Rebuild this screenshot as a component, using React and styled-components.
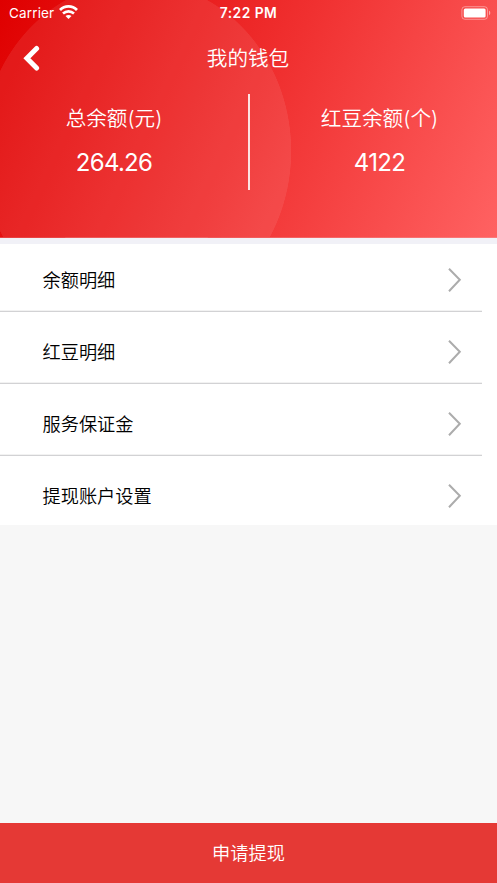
import React from 'react';
import styled, { createGlobalStyle } from 'styled-components';

const GlobalStyle = createGlobalStyle`
  * {
    box-sizing: border-box;
  }
  body {
    margin: 0;
    font-family: Inter, 'Noto Sans CJK SC', sans-serif;
  }
`;

const Page = styled.div`
  display: flex;
  flex-direction: column;
  height: 883px;
  background-color: #f7f7f7;
`;

const Header = styled.header`
  height: 238px;
  flex-shrink: 0;
  color: #fff;
  border-bottom: 1px solid rgba(255, 255, 255, 0.25);
  background:
    radial-gradient(155px 170px at 136.5px 151px, rgba(255, 255, 255, 0.08) 99.6%, transparent 100%),
    linear-gradient(115deg, #df0000 0%, #f03030 52%, #ff6262 100%);
`;

const StatusBar = styled.div`
  display: grid;
  grid-template-columns: 1fr auto 1fr;
  align-items: center;
  height: 25px;
  padding: 0 6px 0 9px;
`;

const Carrier = styled.div`
  display: flex;
  align-items: center;
  gap: 5px;
  font-size: 13.5px;
  letter-spacing: 0.15px;
`;

const Time = styled.div`
  margin-right: 3px;
  font-size: 13.8px;
  font-weight: 600;
  letter-spacing: 0.45px;
`;

const Battery = styled.svg`
  justify-self: end;
`;

const NavBar = styled.div`
  display: grid;
  grid-template-columns: 1fr auto 1fr;
  align-items: center;
  height: 66px;
  padding: 0 24px 0 23px;
`;

const BackButton = styled.button`
  display: flex;
  width: 18px;
  padding: 0;
  border: 0;
  background: none;
`;

const Title = styled.h1`
  margin: 0;
  padding-top: 2px;
  font-size: 20.6px;
  line-height: 30px;
  font-weight: 350;
`;

const Balances = styled.div`
  display: grid;
  grid-template-columns: 228px 41px 221px;
  padding-top: 3px;
`;

const Balance = styled.div`
  display: flex;
  flex-direction: column;
  align-items: center;
  padding-top: 10px;
`;

const BalanceLabel = styled.div`
  font-size: 20.6px;
  font-weight: 350;
  line-height: 30px;
`;

const BalanceValue = styled.div`
  margin-top: 13px;
  font-size: 24px;
  font-weight: 400;
  line-height: 32px;
  letter-spacing: -0.7px;
`;

const Divider = styled.div`
  width: 2px;
  height: 96px;
  justify-self: center;
  background-color: rgba(255, 255, 255, 0.85);
`;

const Menu = styled.div`
  height: 287px;
  flex-shrink: 0;
  overflow: hidden;
  border-top: 6px solid #f1f1f7;
  background-color: #fff;
`;

const MenuItem = styled.div`
  display: flex;
  align-items: center;
  justify-content: space-between;
  width: 482px;
  height: 72px;
  padding: 8px 20px 0 42.5px;
  border-bottom: 1px solid #d2d2d4;
  box-shadow: 0 -1px 0 #f2f2f2 inset;
  color: #000;
  font-size: 18.2px;
  font-weight: 350;

  &:first-child {
    height: 68px;
    padding-top: 4px;
  }
`;

const ItemLabel = styled.span`
  padding-bottom: 2px;
`;

const SubmitButton = styled.button`
  height: 60px;
  margin-top: auto;
  padding: 0 0 2px;
  border: 0;
  color: #fff;
  background-color: #e53935;
  font-family: inherit;
  font-size: 18.2px;
  font-weight: 350;
`;

const items = ['余额明细', '红豆明细', '服务保证金', '提现账户设置'];

const WifiIcon = () => (
  <svg width="19" height="15" viewBox="0 0 19 15" fill="none" stroke="#fff">
    <path d="M1 5C5.8.2 13.2.2 18 5" strokeWidth="2.8" />
    <path d="M4 8.5c3.2-2.9 7.8-2.9 11 0" strokeWidth="2.6" />
    <path d="M9.5 14 6.5 11c1.7-1.5 4.3-1.5 6 0Z" fill="#fff" stroke="none" />
  </svg>
);

const BatteryIcon = () => (
  <Battery width="30" height="14" viewBox="0 0 30 14">
    <rect x="0.9" y="0.7" width="25.6" height="12.6" rx="3" fill="none" stroke="#fff" strokeOpacity="0.4" />
    <rect x="2.8" y="2.6" width="21.8" height="8.8" rx="1.5" fill="#fff" />
    <path d="M28 4.8c1.7.6 1.7 3.8 0 4.4Z" fill="#fff" fillOpacity="0.5" />
  </Battery>
);

const ArrowIcon = () => (
  <svg width="16" height="26" viewBox="0 0 16 26" fill="none" stroke="#acacac" strokeWidth="2">
    <path d="m3 1.8 10.8 11L3 24.2" />
  </svg>
);

const App = () => (
  <Page>
    <GlobalStyle />
    <Header>
      <StatusBar>
        <Carrier>
          Carrier
          <WifiIcon />
        </Carrier>
        <Time>7:22 PM</Time>
        <BatteryIcon />
      </StatusBar>
      <NavBar>
        <BackButton aria-label="返回">
          <svg width="18" height="26" viewBox="0 0 18 26" fill="none" stroke="#fff">
            <path d="M13.6 3.5 3.9 13.3l9.7 9.7" strokeWidth="5" strokeLinecap="round" />
          </svg>
        </BackButton>
        <Title>我的钱包</Title>
      </NavBar>
      <Balances>
        <Balance>
          <BalanceLabel>总余额(元)</BalanceLabel>
          <BalanceValue>264.26</BalanceValue>
        </Balance>
        <Divider />
        <Balance>
          <BalanceLabel>红豆余额(个)</BalanceLabel>
          <BalanceValue>4122</BalanceValue>
        </Balance>
      </Balances>
    </Header>
    <Menu>
      {items.map((item) => (
        <MenuItem key={item}>
          <ItemLabel>{item}</ItemLabel>
          <ArrowIcon />
        </MenuItem>
      ))}
    </Menu>
    <SubmitButton>申请提现</SubmitButton>
  </Page>
);

export default App;
